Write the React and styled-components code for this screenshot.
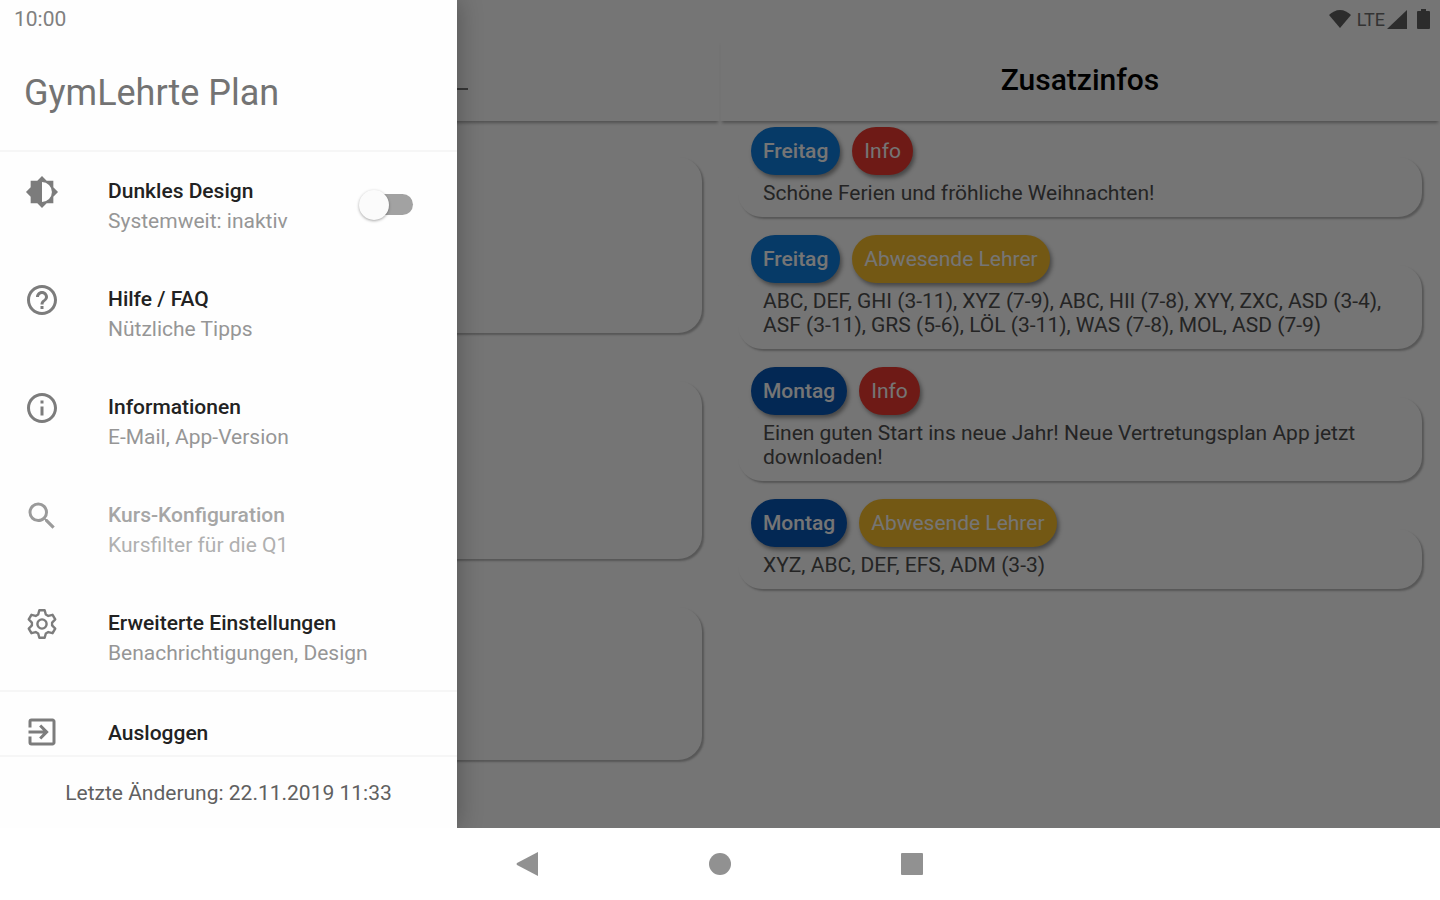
import React, { useId } from "react";
import styled, { createGlobalStyle } from "styled-components";
import { MdHelpOutline, MdInfoOutline, MdSearch, MdExitToApp } from "react-icons/md";

const GlobalStyle = createGlobalStyle`
  *, *::before, *::after { box-sizing: border-box; }
  body {
    margin: 0;
    background: #fff;
    font-family: Roboto, "Liberation Sans", sans-serif;
  }
  button { font: inherit; color: inherit; background: none; border: 0; padding: 0; cursor: pointer; }
  h1, h2, p { margin: 0; }
`;

const Screen = styled.div`
  min-height: 100vh;
  display: flex;
  flex-direction: column;
`;

const Stage = styled.div`
  position: relative;
  flex: 1;
  display: flex;
  flex-direction: column;
  overflow: hidden;
  background: #fefefe;
`;

const StatusBar = styled.div`
  height: 38px;
  display: flex;
  align-items: center;
  justify-content: flex-end;
  padding-right: 10px;
  font-size: 18px;
  color: #707070;
`;

const StatusLabel = styled.span`
  padding: 0 2px 0 6px;
`;

const StatusIcon = styled.svg`
  display: block;
  fill: #606060;
`;

const BatteryIcon = styled(StatusIcon)`
  margin-left: 10px;
`;

const Columns = styled.main`
  flex: 1;
  display: grid;
  grid-template-columns: 1fr 1fr;
`;

const Column = styled.section`
  display: flex;
  flex-direction: column;
`;

const ColumnHeader = styled.header`
  height: 83px;
  display: flex;
  align-items: center;
  justify-content: center;
  box-shadow: 0 4px 3px -2px rgba(0, 0, 0, 0.3);
`;

const ColumnTitle = styled.h2`
  font-size: 30px;
  line-height: 36px;
  font-weight: 500;
  color: #000;
`;

const ClassField = styled.input`
  width: 216px;
  height: 20px;
  border: 0;
  border-bottom: 2px solid #777;
  background: none;
  font: inherit;
`;

const CardList = styled.div`
  display: flex;
  flex-direction: column;
  gap: 48px;
  padding: 36px 18px;
`;

const Card = styled.article`
  min-height: ${(p) => p.$minHeight || 0}px;
  padding: 0 12px 12px 13px;
  border-radius: 24px;
  background: #fefefe;
  box-shadow: 2px 2px 2px rgba(0, 0, 0, 0.26);
`;

const Chips = styled.div`
  display: flex;
  gap: 12px;
  margin: -30px 0 6px;
`;

const Chip = styled.span`
  height: 48px;
  padding: 0 12px;
  display: flex;
  align-items: center;
  border-radius: 24px;
  font-size: 21px;
  font-weight: ${(p) => (p.$day ? 500 : 400)};
  color: #fff;
  background: ${(p) => p.$color};
  box-shadow: 2px 3px 4px rgba(0, 0, 0, 0.4);
`;

const CardText = styled.p`
  padding: 0 12px;
  font-size: 21px;
  line-height: 24px;
  color: #505050;
`;

const Scrim = styled.div`
  position: absolute;
  inset: 0;
  background: rgba(0, 0, 0, 0.54);
`;

const Drawer = styled.aside`
  position: absolute;
  inset: 0 auto 0 0;
  width: 457px;
  max-width: 100%;
  display: flex;
  flex-direction: column;
  background: #fefefe;
  box-shadow: 0 0 24px rgba(0, 0, 0, 0.3);
`;

const Clock = styled.time`
  height: 38px;
  padding-left: 14px;
  font-size: 21px;
  line-height: 38px;
  color: #808080;
`;

const DrawerTitle = styled.h1`
  height: 114px;
  padding-left: 24px;
  border-bottom: 2px solid #f6f6f6;
  font-size: 36px;
  line-height: 110px;
  font-weight: 400;
  color: #737373;
`;

const Menu = styled.nav`
  flex: 1 1 0;
  min-height: 0;
  overflow: hidden;
`;

const rowLayout = `
  width: 100%;
  height: 108px;
  display: flex;
  align-items: flex-start;
  padding: 22px 44px 0 24px;
  text-align: left;
`;

const MenuButton = styled.button`
  && {
    ${rowLayout}
    border-bottom: ${(p) => (p.$divided ? "2px solid #f6f6f6" : "0")};
  }
`;

const SwitchRow = styled.label`
  ${rowLayout}
`;

const MenuIcon = styled.span`
  width: 84px;
  display: flex;
  color: ${(p) => (p.$muted ? "#9a9a9a" : "#7c7c7c")};
`;

const MenuText = styled.span`
  flex: 1;
  display: flex;
  flex-direction: column;
  padding-top: 2px;
  font-size: 21px;
  line-height: 30px;
`;

const MenuTitle = styled.span`
  font-weight: 500;
  line-height: ${(p) => (p.$single ? 34 : 30)}px;
  color: ${(p) => (p.$muted ? "#a6a6a6" : "#222")};
`;

const MenuHint = styled.span`
  color: ${(p) => (p.$muted ? "#b0b0b0" : "#969696")};
`;

const Switch = styled.input`
  appearance: none;
  flex: none;
  width: 51px;
  height: 21px;
  margin: 20px 0 0;
  display: flex;
  align-items: center;
  border-radius: 12px;
  background: #a2a2a2;

  &::before {
    content: "";
    flex: none;
    width: 30px;
    height: 30px;
    margin-left: -3px;
    border-radius: 50%;
    background: #fbfbfb;
    box-shadow: 0 1px 3px rgba(0, 0, 0, 0.35);
  }
  &:checked::before {
    margin-left: 24px;
  }
`;

const DrawerFooter = styled.footer`
  height: 73px;
  border-top: 2px solid #f6f6f6;
  font-size: 21px;
  line-height: 72px;
  text-align: center;
  color: #606060;
`;

const SystemNav = styled.nav`
  height: 72px;
  display: flex;
  align-items: center;
  justify-content: center;
  gap: 144px;
  background: #fff;
`;

const SystemButton = styled.button`
  width: 48px;
  height: 48px;
  display: grid;
  place-items: center;
`;

const SystemIcon = styled.svg`
  width: 24px;
  height: 26px;
  fill: #919191;
`;

function BrightnessIcon({ size }) {
  return (
    <svg width={size} height={size} viewBox="-12.7 -12.7 25.4 25.4" fill="currentColor">
      <path
        fillRule="evenodd"
        d="M8 3.3 11.3 0 8-3.3V-8H3.3L0-11.3-3.3-8H-8v4.7L-11.3 0-8 3.3V8h4.7L0 11.3 3.3 8H8zM0 7V-7A7 7 0 0 1 0 7z"
      />
    </svg>
  );
}

const gearOutline = [0, 60, 120, 180, 240, 300]
  .flatMap((tooth) =>
    [
      [10.2, -22],
      [14, -11],
      [14, 11],
      [10.2, 22],
    ].map(([radius, offset]) => {
      const angle = ((tooth + offset - 90) * Math.PI) / 180;
      return `${(radius * Math.cos(angle)).toFixed(2)},${(radius * Math.sin(angle)).toFixed(2)}`;
    })
  )
  .join(" ");

function GearIcon({ size }) {
  return (
    <svg
      width={size}
      height={size}
      viewBox="-18 -18 36 36"
      fill="none"
      stroke="currentColor"
      strokeWidth="2.4"
      strokeLinejoin="round"
    >
      <polygon points={gearOutline} />
      <circle r="4.6" />
    </svg>
  );
}

const notices = [
  { day: "Freitag", color: "#0f7ee0", kind: "Info", text: "Schöne Ferien und fröhliche Weihnachten!" },
  {
    day: "Freitag",
    color: "#0f7ee0",
    kind: "Abwesende Lehrer",
    text: "ABC, DEF, GHI (3-11), XYZ (7-9), ABC, HII (7-8), XYY, ZXC, ASD (3-4), ASF (3-11), GRS (5-6), LÖL (3-11), WAS (7-8), MOL, ASD (7-9)",
  },
  {
    day: "Montag",
    color: "#0857b8",
    kind: "Info",
    text: "Einen guten Start ins neue Jahr! Neue Vertretungsplan App jetzt downloaden!",
  },
  { day: "Montag", color: "#0857b8", kind: "Abwesende Lehrer", text: "XYZ, ABC, DEF, EFS, ADM (3-3)" },
];

const kindColors = { Info: "#f03a30", "Abwesende Lehrer": "#fbc02d" };

const menuItems = [
  { icon: MdHelpOutline, title: "Hilfe / FAQ", hint: "Nützliche Tipps" },
  { icon: MdInfoOutline, title: "Informationen", hint: "E-Mail, App-Version" },
  { icon: MdSearch, title: "Kurs-Konfiguration", hint: "Kursfilter für die Q1", muted: true },
  { icon: GearIcon, title: "Erweiterte Einstellungen", hint: "Benachrichtigungen, Design", divided: true },
  { icon: MdExitToApp, title: "Ausloggen" },
];

const planCards = [176, 178, 153];

function MenuItem({ icon: Icon, title, hint, muted, divided }) {
  return (
    <MenuButton type="button" disabled={muted} $divided={divided}>
      <MenuIcon $muted={muted}>
        <Icon size={36} />
      </MenuIcon>
      <MenuText>
        <MenuTitle $muted={muted} $single={!hint}>{title}</MenuTitle>
        {hint && <MenuHint $muted={muted}>{hint}</MenuHint>}
      </MenuText>
    </MenuButton>
  );
}

export default function App() {
  const switchId = useId();
  return (
    <Screen>
      <GlobalStyle />
      <Stage>
        <StatusBar>
          <StatusIcon width="22" height="18" viewBox="0 0 22 18">
            <path d="M11 18 0 5C3 2 7 0 11 0s8 2 11 5z" />
          </StatusIcon>
          <StatusLabel>LTE</StatusLabel>
          <StatusIcon width="20" height="19" viewBox="0 0 20 19">
            <path d="M0 19 20 0v19z" />
          </StatusIcon>
          <BatteryIcon width="13" height="20" viewBox="0 0 13 20">
            <path d="M4 0h5v2h3q1 0 1 1v16q0 1-1 1H1q-1 0-1-1V3q0-1 1-1h3z" />
          </BatteryIcon>
        </StatusBar>
        <Columns>
          <Column>
            <ColumnHeader>
              <ClassField type="text" aria-label="Klasse" />
            </ColumnHeader>
            <CardList>
              {planCards.map((height, i) => (
                <Card key={i} $minHeight={height} />
              ))}
            </CardList>
          </Column>
          <Column>
            <ColumnHeader>
              <ColumnTitle>Zusatzinfos</ColumnTitle>
            </ColumnHeader>
            <CardList>
              {notices.map((n, i) => (
                <Card key={i}>
                  <Chips>
                    <Chip $day $color={n.color}>{n.day}</Chip>
                    <Chip $color={kindColors[n.kind]}>{n.kind}</Chip>
                  </Chips>
                  <CardText>{n.text}</CardText>
                </Card>
              ))}
            </CardList>
          </Column>
        </Columns>
        <Scrim />
        <Drawer>
          <Clock>10:00</Clock>
          <DrawerTitle>GymLehrte Plan</DrawerTitle>
          <Menu>
            <SwitchRow htmlFor={switchId}>
              <MenuIcon>
                <BrightnessIcon size={36} />
              </MenuIcon>
              <MenuText>
                <MenuTitle>Dunkles Design</MenuTitle>
                <MenuHint>Systemweit: inaktiv</MenuHint>
              </MenuText>
              <Switch id={switchId} type="checkbox" role="switch" />
            </SwitchRow>
            {menuItems.map((item) => (
              <MenuItem key={item.title} {...item} />
            ))}
          </Menu>
          <DrawerFooter>Letzte Änderung: 22.11.2019 11:33</DrawerFooter>
        </Drawer>
      </Stage>
      <SystemNav>
        <SystemButton type="button" aria-label="Zurück">
          <SystemIcon viewBox="0 0 24 26">
            <path d="M22 1v24L1 14q-1-1 0-2z" />
          </SystemIcon>
        </SystemButton>
        <SystemButton type="button" aria-label="Startseite">
          <SystemIcon viewBox="0 0 24 26">
            <circle cx="12" cy="13" r="11" />
          </SystemIcon>
        </SystemButton>
        <SystemButton type="button" aria-label="Übersicht">
          <SystemIcon viewBox="0 0 24 26">
            <rect x="1" y="2" width="22" height="22" rx="1" />
          </SystemIcon>
        </SystemButton>
      </SystemNav>
    </Screen>
  );
}
